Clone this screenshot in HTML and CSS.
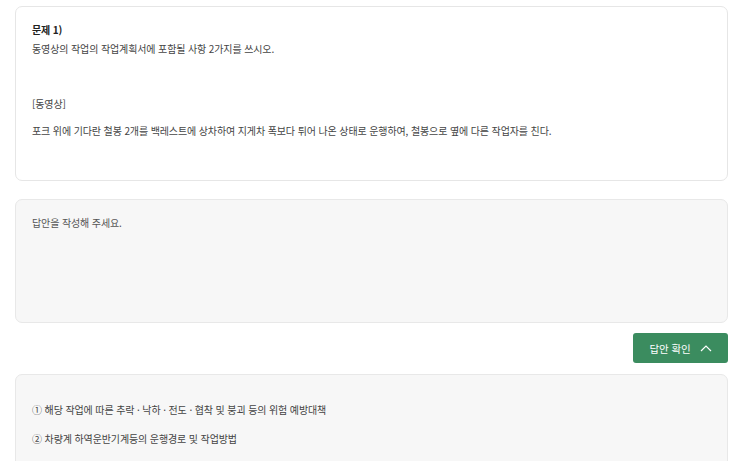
FILE: index.html
```html
<!DOCTYPE html>
<html lang="ko">
<head>
<meta charset="UTF-8">
<meta name="viewport" content="width=device-width, initial-scale=1.0">
<title>문제 1)</title>
<link rel="stylesheet" href="styles.css">
</head>
<body>

<div class="question-card">
    <p class="q-title">문제 1)</p>
    <p class="q-text">동영상의 작업의 작업계획서에 포함될 사항 2가지를 쓰시오.</p>
    <p class="q-media">[동영상]</p>
    <p class="q-desc">포크 위에 기다란 철봉 2개를 백레스트에 상차하여 지게차 폭보다 튀어 나온 상태로 운행하여, 철봉으로 옆에 다른 작업자를 친다.</p>
</div>

<div class="answer-box">
    <p class="placeholder">답안을 작성해 주세요.</p>
</div>

<div class="button-row">
    <button class="check-button" type="button">
        답안 확인
        <svg width="12" height="8" viewBox="0 0 12 8"><path d="M1 7 L6 2 L11 7" fill="none" stroke="#fff" stroke-width="1.2"/></svg>
    </button>
</div>

<div class="solution-box">
    <p>① 해당 작업에 따른 추락 · 낙하 · 전도 · 협착 및 붕괴 등의 위험 예방대책</p>
    <p>② 차량계 하역운반기계등의 운행경로 및 작업방법</p>
</div>

</body>
</html>
```

FILE: styles.css
```css
body {
    font-family: "Noto Sans CJK KR", "Noto Sans", sans-serif;
    font-size: 10px;
    letter-spacing: -0.12px;
    color: #444;
    margin: 0;
    padding: 6px 15px 0;
    background-color: #fff;
}
p {
    margin: 0;
    line-height: 19px;
}
.question-card {
    padding: 13px 16px 40px;
    border: 1px solid #e6e6e6;
    border-radius: 7px;
    background-color: #fff;
}
.q-title {
    font-weight: bold;
    color: #222;
}
.q-media {
    margin-top: 36px;
}
.q-desc {
    margin-top: 8px;
}
.answer-box {
    margin-top: 18px;
    height: 109px;
    padding: 13px 16px 0;
    border: 1px solid #e8e8e8;
    border-radius: 7px;
    background-color: #f7f7f7;
}
.placeholder {
    color: #555;
}
.button-row {
    display: flex;
    justify-content: flex-end;
    margin-top: 10px;
}
.check-button {
    display: flex;
    align-items: center;
    justify-content: center;
    gap: 9px;
    width: 95px;
    height: 30px;
    border: none;
    border-radius: 3px;
    background-color: #3b8c5f;
    color: #fff;
    font-family: inherit;
    font-size: 10.5px;
    letter-spacing: -0.1px;
    cursor: pointer;
}
.solution-box {
    margin-top: 11px;
    padding: 25px 16px 30px;
    border: 1px solid #e8e8e8;
    border-radius: 7px;
    background-color: #f7f7f7;
}
.solution-box p + p {
    margin-top: 10px;
}
```
